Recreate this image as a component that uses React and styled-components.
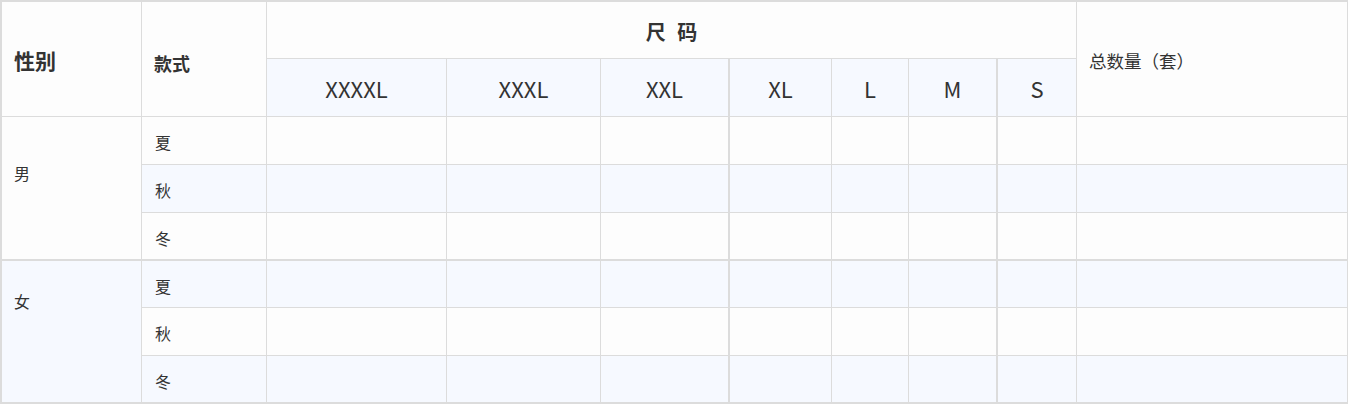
import styled, { createGlobalStyle } from 'styled-components';

const GlobalStyle = createGlobalStyle`
    html, body {
        margin: 0;
        padding: 0;
        background: #ffffff;
    }
    body {
        font-family: "Noto Sans CJK SC", "Noto Sans", sans-serif;
        color: #333333;
    }
`;

const LINE = '#dcdcdc';
const WHITE = '#fdfdfd';
const BLUE = '#f6f9ff';

const Sheet = styled.div`
    display: grid;
    grid-template-columns: 140px 125px 180px 154px 129px 102px 77px 89px 79px 271px;
    grid-template-rows: 57px 58px 48px 48px 48px 47px 48px 48px;
    border-top: 2px solid ${LINE};
    border-left: 2px solid ${LINE};
    width: 1348px;
    box-sizing: border-box;
`;

const Cell = styled.div`
    box-sizing: border-box;
    border-right: ${(p) => (p.$thick ? 2 : 1)}px solid ${LINE};
    border-bottom: ${(p) => (p.$groupEnd ? 2 : 1)}px solid ${LINE};
    background: ${(p) => (p.$alt ? BLUE : WHITE)};
    display: flex;
    align-items: center;
    min-width: 0;
`;

const TitleCell = styled(Cell)`
    grid-row: span 2;
    padding: ${(p) => p.$pad || '0 0 0 13px'};
    font-weight: 700;
    font-size: ${(p) => p.$size || 16}px;
`;

const SizeGroup = styled(Cell)`
    grid-column: span 7;
    justify-content: center;
    padding-top: 3px;
    font-weight: 700;
    font-size: 20px;
    word-spacing: 7px;
`;

const TotalHead = styled(Cell)`
    grid-row: span 2;
    padding: 3px 0 0 12px;
    font-size: 17.5px;
`;

const SizeCell = styled(Cell)`
    justify-content: center;
    padding-top: 1px;
    font-size: 22px;
`;

const GenderCell = styled(Cell)`
    grid-row: span 3;
    align-items: flex-start;
    padding: ${(p) => p.$top}px 0 0 12px;
    font-size: 16px;
`;

const SeasonCell = styled(Cell)`
    padding: 3px 0 0 13px;
    font-size: 16px;
`;

const sizes = ['XXXXL', 'XXXL', 'XXL', 'XL', 'L', 'M', 'S'];
const thickAfter = ['XXL', 'M'];
const seasons = ['夏', '秋', '冬'];
const groups = [
    { name: '男', top: 44 },
    { name: '女', top: 28 },
];

function SizeSheet() {
    let rowIndex = 0;

    function _renderRow(group, season, i, alt) {
        const last = i === seasons.length - 1;
        const key = group + season;
        return [
            <SeasonCell key={key + 's'} $alt={alt} $groupEnd={last}>{season}</SeasonCell>,
            ...sizes.map((size) => (
                <Cell key={key + size} $alt={alt} $groupEnd={last} $thick={thickAfter.includes(size)} />
            )),
            <Cell key={key + 't'} $alt={alt} $groupEnd={last} />,
        ];
    }

    return (
        <Sheet>
            <TitleCell $size={21} $pad="2px 0 0 12px">性别</TitleCell>
            <TitleCell $size={18} $pad="8px 0 0 12px">款式</TitleCell>
            <SizeGroup>尺 码</SizeGroup>
            <TotalHead>总数量（套）</TotalHead>
            {sizes.map((size) => (
                <SizeCell key={size} $alt $thick={thickAfter.includes(size)}>{size}</SizeCell>
            ))}
            {groups.map((group) => {
                const first = rowIndex;
                const rows = seasons.map((season, i) => _renderRow(group.name, season, i, rowIndex++ % 2 === 1));
                return [
                    <GenderCell key={group.name} $top={group.top} $alt={first % 2 === 1} $groupEnd>
                        {group.name}
                    </GenderCell>,
                    ...rows.flat(),
                ];
            })}
        </Sheet>
    );
}

export default function App() {
    return (
        <>
            <GlobalStyle />
            <SizeSheet />
        </>
    );
}
